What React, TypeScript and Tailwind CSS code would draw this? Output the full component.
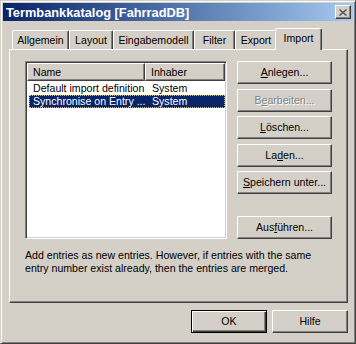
const raised =
  'border border-t-white border-l-white border-r-[#404040] border-b-[#404040] shadow-[inset_-1px_-1px_#808080]'

const tabs = [
  { label: 'Allgemein', w: 'w-[57px]' },
  { label: 'Layout', w: 'w-[44px]' },
  { label: 'Eingabemodell', w: 'w-[81px]' },
  { label: 'Filter', w: 'w-[41px]' },
  { label: 'Export', w: 'w-[42px]' },
]

const Btn = ({ children, disabled }: { children: React.ReactNode; disabled?: boolean }) => (
  <div
    className={`${raised} flex h-[23px] w-[95px] items-center justify-center bg-[#d4d0c8] ${
      disabled ? 'text-[#808080] [text-shadow:1px_1px_0_#fff]' : 'text-black'
    }`}
  >
    {children}
  </div>
)

const U = ({ children }: { children: React.ReactNode }) => <span className="underline underline-offset-1">{children}</span>

export default function App() {
  return (
    <div className="relative h-[344px] w-[356px] overflow-hidden border border-t-[#d4d0c8] border-l-[#d4d0c8] border-r-[#404040] border-b-[#404040] bg-[#d4d0c8] text-[10.6px] leading-[13px] text-black shadow-[inset_1px_1px_#fff,inset_-1px_-1px_#808080] [font-family:'Liberation_Sans',Arial,sans-serif]">
      {/* title bar */}
      <div className="mx-[2px] mt-[2px] flex h-[18px] items-center justify-between bg-gradient-to-r from-[#0a246a] to-[#a6caf0] pl-[3px] pr-[2px]">
        <span className="whitespace-nowrap text-[12.8px] font-bold text-white">Termbankkatalog [FahrradDB]</span>
        <div className={`${raised} flex h-[14px] w-[16px] items-center justify-center bg-[#d4d0c8]`}>
          <svg width="8" height="7" viewBox="0 0 8 7">
            <path d="M0.5 0.5 L7.5 6.5 M7.5 0.5 L0.5 6.5" stroke="#505050" strokeWidth="1.4" />
          </svg>
        </div>
      </div>

      <div className="pl-[8px] pt-[7px]">
        {/* tabs */}
        <div className="flex items-end pl-[3px]">
          {tabs.map((t) => (
            <div
              key={t.label}
              className={`${t.w} flex h-[19px] items-center justify-center whitespace-nowrap rounded-t-[2px] border-l border-t border-r border-l-white border-t-white border-r-[#404040] pt-[1px] shadow-[inset_-1px_0_#808080]`}
            >
              {t.label}
            </div>
          ))}
          <div className="relative z-10 -mx-[2px] -mb-px flex h-[22px] w-[47px] items-start justify-center rounded-t-[2px] border-l border-t border-r border-l-white border-t-white border-r-[#404040] bg-[#d4d0c8] pt-[3px] shadow-[inset_-1px_0_#808080]">
            Import
          </div>
        </div>

        {/* panel */}
        <div className="h-[254px] w-[339px] border border-t-white border-l-white border-r-[#404040] border-b-[#404040] pl-[15px] pt-[11px] shadow-[inset_-1px_-1px_#808080]">
          <div className="flex gap-[10px]">
            <div className="h-[178px] w-[202px] border border-t-[#808080] border-l-[#808080] border-r-white border-b-white bg-white p-[1px] shadow-[inset_1px_1px_#404040,inset_-1px_-1px_#d4d0c8]">
              <div className="flex h-[18px]">
                <div className={`${raised} flex w-[118px] items-center bg-[#d4d0c8] pl-[5px]`}>Name</div>
                <div className={`${raised} flex flex-1 items-center bg-[#d4d0c8] pl-[5px]`}>Inhaber</div>
              </div>
              <div className="mt-[1px] whitespace-nowrap pl-[2px]">
                <div className="flex h-[13px] items-center border border-transparent">
                  <span className="w-[116px] overflow-hidden pl-[3px]">Default import definition</span>
                  <span className="pl-[6px]">System</span>
                </div>
                <div className="flex h-[13px] items-center border border-dotted border-[#c8c080] bg-[#0a246a] text-white">
                  <span className="w-[116px] overflow-hidden pl-[3px]">Synchronise on Entry ...</span>
                  <span className="pl-[6px]">System</span>
                </div>
              </div>
            </div>

            <div className="flex h-[178px] flex-col gap-[4.5px]">
              <Btn>
                <U>A</U>nlegen...
              </Btn>
              <Btn disabled>
                B<U>e</U>arbeiten...
              </Btn>
              <Btn>
                <U>L</U>öschen...
              </Btn>
              <Btn>
                La<U>d</U>en...
              </Btn>
              <Btn>
                <U>S</U>peichern unter...
              </Btn>
              <div className="mt-auto">
                <Btn>
                  Aus<U>f</U>ühren...
                </Btn>
              </div>
            </div>
          </div>

          <p className="mt-[10px] w-[310px]">
            Add entries as new entries. However, if entries with the same entry number exist already, then the entries
            are merged.
          </p>
        </div>

        {/* bottom buttons */}
        <div className="mt-[7px] flex w-[339px] justify-end gap-[5px]">
          <div className="flex h-[23px] w-[76px] items-center justify-center border border-black bg-[#d4d0c8] shadow-[inset_1px_1px_#fff,inset_-1px_-1px_#404040,inset_-2px_-2px_#808080]">
            OK
          </div>
          <div className={`${raised} flex h-[23px] w-[76px] items-center justify-center bg-[#d4d0c8]`}>Hilfe</div>
        </div>
      </div>
    </div>
  )
}
